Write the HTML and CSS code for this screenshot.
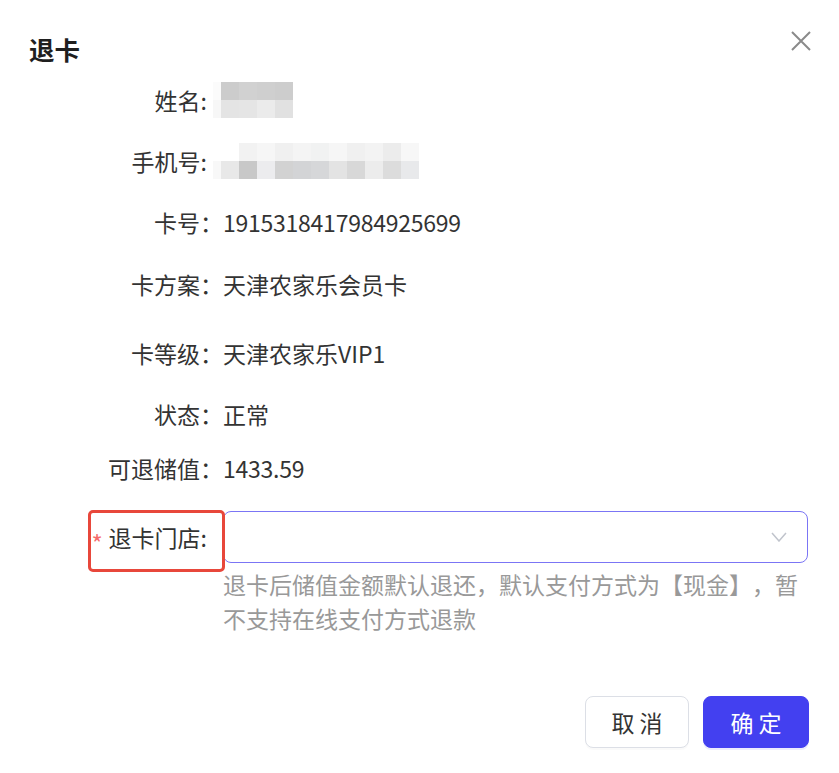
FILE: index.html
```html
<!DOCTYPE html>
<html lang="zh-CN">
<head>
<meta charset="utf-8">
<title>退卡</title>
<link rel="stylesheet" href="styles.css">
</head>
<body>
<div class="dialog">
  <div class="header">
    <div class="title">退卡</div>
    <button class="close" aria-label="关闭">
      <svg width="20" height="20" viewBox="0 0 20 20"><path d="M1 1 L19 19 M19 1 L1 19" stroke="#8a8a8a" stroke-width="2" fill="none"/></svg>
    </button>
  </div>

  <div class="form">
    <div class="row">
      <div class="label ascii">姓名:</div>
      <div class="value blur-val">
        <svg width="80" height="36" viewBox="0 0 80 36">
          <rect x="0" y="0" width="8" height="18" fill="#fbfbfb"/>
          <rect x="8" y="0" width="18" height="18" fill="#cccccc"/>
          <rect x="26" y="0" width="18" height="18" fill="#d1d1d1"/>
          <rect x="44" y="0" width="18" height="18" fill="#cfcfcf"/>
          <rect x="62" y="0" width="18" height="18" fill="#cdcdcd"/>
          <rect x="0" y="18" width="8" height="18" fill="#f7f7f7"/>
          <rect x="8" y="18" width="18" height="18" fill="#e4e4e4"/>
          <rect x="26" y="18" width="18" height="18" fill="#e5e5e5"/>
          <rect x="44" y="18" width="18" height="18" fill="#ebebeb"/>
          <rect x="62" y="18" width="18" height="18" fill="#e1e1e1"/>
        </svg>
      </div>
    </div>

    <div class="row">
      <div class="label ascii">手机号:</div>
      <div class="value blur-val">
        <svg width="206" height="36" viewBox="0 0 206 36">
          <rect x="26" y="0" width="18" height="18" fill="#f2f2f2"/>
          <rect x="44" y="0" width="18" height="18" fill="#f6f6f6"/>
          <rect x="62" y="0" width="18" height="18" fill="#f0f0f0"/>
          <rect x="80" y="0" width="18" height="18" fill="#f4f4f4"/>
          <rect x="98" y="0" width="18" height="18" fill="#f1f2f2"/>
          <rect x="116" y="0" width="18" height="18" fill="#f6f6f6"/>
          <rect x="134" y="0" width="18" height="18" fill="#f0f0f0"/>
          <rect x="152" y="0" width="18" height="18" fill="#f3f3f3"/>
          <rect x="170" y="0" width="18" height="18" fill="#ececec"/>
          <rect x="188" y="0" width="18" height="18" fill="#f7f7f7"/>
          <rect x="0" y="18" width="8" height="18" fill="#f8f8f8"/>
          <rect x="8" y="18" width="18" height="18" fill="#e8e8e8"/>
          <rect x="26" y="18" width="18" height="18" fill="#c8c8c8"/>
          <rect x="44" y="18" width="18" height="18" fill="#ececee"/>
          <rect x="62" y="18" width="18" height="18" fill="#d2d2d2"/>
          <rect x="80" y="18" width="18" height="18" fill="#d3d4d6"/>
          <rect x="98" y="18" width="18" height="18" fill="#d6d7d9"/>
          <rect x="116" y="18" width="18" height="18" fill="#e3e3e3"/>
          <rect x="134" y="18" width="18" height="18" fill="#d8d8d8"/>
          <rect x="152" y="18" width="18" height="18" fill="#ececec"/>
          <rect x="170" y="18" width="18" height="18" fill="#dcdcdc"/>
          <rect x="188" y="18" width="18" height="18" fill="#e8e9eb"/>
        </svg>
      </div>
    </div>

    <div class="row">
      <div class="label">卡号：</div>
      <div class="value num">1915318417984925699</div>
    </div>

    <div class="row gap-28">
      <div class="label">卡方案：</div>
      <div class="value">天津农家乐会员卡</div>
    </div>

    <div class="row gap-35">
      <div class="label">卡等级：</div>
      <div class="value">天津农家乐VIP1</div>
    </div>

    <div class="row">
      <div class="label">状态：</div>
      <div class="value">正常</div>
    </div>

    <div class="row gap-20">
      <div class="label">可退储值：</div>
      <div class="value num">1433.59</div>
    </div>

    <div class="row select-row gap-26">
      <div class="label ascii required"><span class="star">*</span>退卡门店:</div>
      <div class="field">
        <div class="select">
          <svg class="chevron" width="16" height="10" viewBox="0 0 16 10"><path d="M1 1 L8 9 L15 1" stroke="#c0c4cc" stroke-width="1.5" fill="none"/></svg>
        </div>
        <div class="hint">退卡后储值金额默认退还，默认支付方式为【现金】，暂不支持在线支付方式退款</div>
      </div>
      <div class="highlight"></div>
    </div>
  </div>

  <div class="footer">
    <button class="btn">取 消</button>
    <button class="btn primary">确 定</button>
  </div>
</div>
</body>
</html>
```

FILE: styles.css
```css
* { box-sizing: border-box; }
html, body {
  margin: 0;
  padding: 0;
  background: #ffffff;
}
body {
  font-family: "Noto Sans CJK SC", "Noto Sans", sans-serif;
  color: #333333;
  width: 839px;
  height: 773px;
  overflow: hidden;
  text-spacing-trim: space-all;
}
.dialog {
  padding: 0 31px 0 0;
}
.header {
  display: flex;
  justify-content: space-between;
  align-items: flex-start;
  padding: 31px 0 0 29px;
  height: 83px;
}
.title {
  font-size: 25.5px;
  font-weight: 700;
  line-height: 36px;
  color: #1f1f1f;
}
.close {
  border: 0;
  background: none;
  padding: 0;
  margin-right: -3px;
  width: 20px;
  height: 20px;
  display: block;
}
.close svg { display: block; }

.form {
  display: flex;
  flex-direction: column;
}
.row {
  display: flex;
  align-items: center;
  margin-top: 27px;
  font-size: 23px;
  line-height: 34px;
  position: relative;
}
.row:first-child { margin-top: 0; }
.row.gap-28 { margin-top: 28px; }
.row.gap-35 { margin-top: 35px; }
.row.gap-20 { margin-top: 20px; }
.row.gap-26 { margin-top: 26px; }

.label {
  width: 223px;
  flex: none;
  text-align: right;
  color: #333333;
  white-space: nowrap;
}
.label.ascii { padding-right: 16px; }
.value {
  color: #333333;
  white-space: nowrap;
}
.value.num { letter-spacing: -0.25px; }
.blur-val {
  margin-left: -10px;
  height: 34px;
  display: flex;
  align-items: center;
}
.blur-val svg { display: block; }

.select-row { align-items: flex-start; }
.select-row .label {
  line-height: 52px;
}
.star {
  display: inline-block;
  color: #f56c6c;
  font-size: 24px;
  margin-right: 6px;
  position: relative;
  top: 6px;
}
.field {
  flex: 1;
  min-width: 0;
}
.select {
  height: 52px;
  border: 1px solid #7b75f5;
  border-radius: 8px;
  display: flex;
  align-items: center;
  justify-content: flex-end;
  padding-right: 20px;
}
.chevron { display: block; }
.hint {
  margin-top: 4px;
  color: #999999;
  line-height: 34px;
}
.highlight {
  position: absolute;
  left: 88px;
  top: -1px;
  width: 137px;
  height: 62px;
  border: 3px solid #e8473b;
  border-radius: 5px;
  pointer-events: none;
}

.footer {
  display: flex;
  justify-content: flex-end;
  gap: 14px;
  margin-top: 61px;
}
.btn {
  font-family: "Noto Sans CJK SC", "Noto Sans", sans-serif;
  font-size: 23px;
  width: 104px;
  height: 52px;
  border: 1px solid #dcdfe6;
  border-radius: 8px;
  background: #ffffff;
  color: #333333;
  padding: 0;
  box-shadow: 0 2px 0 rgba(0, 0, 0, 0.02);
}
.btn.primary {
  width: 106px;
  margin-right: -1px;
  background: #4340f0;
  border-color: #4340f0;
  color: #ffffff;
  box-shadow: 0 2px 0 rgba(67, 64, 240, 0.1);
}
```
